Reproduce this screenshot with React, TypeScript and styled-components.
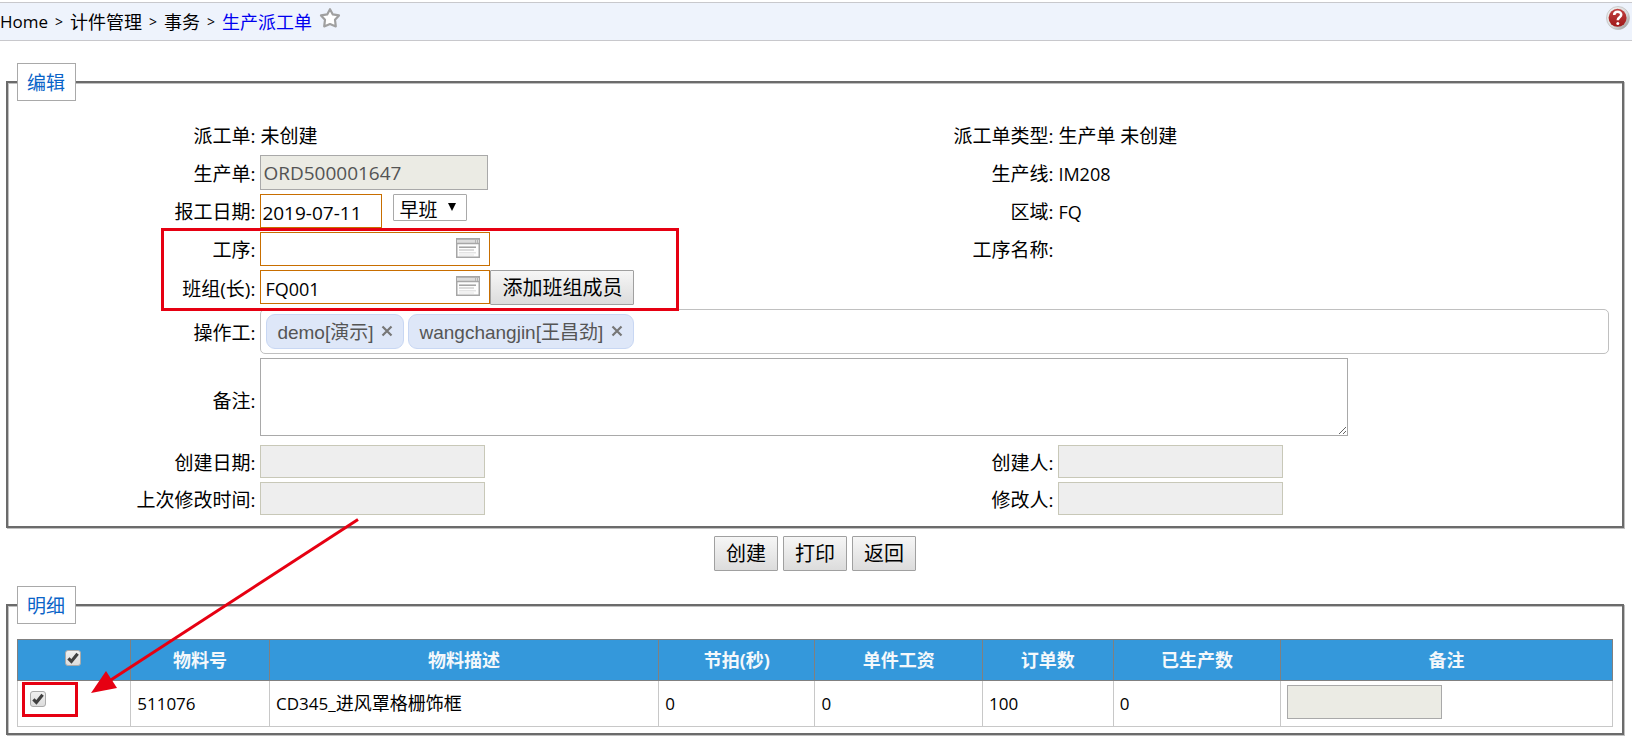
import React, { useState } from 'react';
import styled, { createGlobalStyle, css } from 'styled-components';

const fontStack = '"Open Sans", "Noto Sans CJK SC", sans-serif';

const GlobalStyle = createGlobalStyle`
  *, *::before, *::after { box-sizing: border-box; }
  body {
    margin: 0;
    background: #fff;
    color: #000;
    font: 19px/30px ${fontStack};
  }
  input, select, textarea, button { font-family: inherit; color: inherit; margin: 0; }
`;

const Page = styled.div`
  position: relative;
  padding-top: 2px;
`;

const TopBar = styled.header`
  display: flex;
  justify-content: space-between;
  align-items: flex-start;
  height: 39px;
  padding-right: 2px;
  border-top: 1px solid #c8c8cc;
  border-bottom: 1px solid #c8c8cc;
  background: #eef3fc;
`;

const Breadcrumb = styled.nav`
  display: flex;
  align-items: center;
  gap: 7px;
  height: 37px;
  font-size: 18px;
  white-space: nowrap;
`;

const Crumb = styled.a<{ $current?: boolean }>`
  color: ${(p) => (p.$current ? '#0000f0' : '#000')};
  text-decoration: none;
`;

const Latin = styled.span`
  font-size: 17px;
`;

const Separator = styled.span`
  font-size: 14px;
`;

const IconButton = styled.button`
  display: block;
  padding: 0;
  border: 0;
  background: none;
  line-height: 0;
`;

const StarButton = styled(IconButton)`
  align-self: flex-start;
  padding: 4px 0 0;
`;

const HelpButton = styled(IconButton)`
  padding-top: 3px;
`;

const Main = styled.main`
  padding: 22px 8px 6px 6px;
`;

const Panel = styled.fieldset`
  min-width: 0;
  margin: 0;
  padding: 0 9px;
  border: 2px solid #6b6b6b;
  box-shadow: 1px 1px 0 #c0c0c0, inset 1px 1px 0 #c0c0c0;
`;

const EditPanel = styled(Panel)`
  padding-bottom: 11px;
`;

const DetailPanel = styled(Panel)`
  padding-bottom: 6px;
`;

const Legend = styled.legend`
  padding: 4px 10px 2px 9px;
  border: 1px solid #a9a9a9;
  background: #fff;
  color: #0a64c8;
`;

const FormGrid = styled.div`
  display: grid;
  grid-template-columns: 15% 35% 15% 35%;
  row-gap: 4px;
  align-items: center;
  padding-top: 18px;
`;

const FieldLabel = styled.label`
  padding: 2px 1px 0 0;
  text-align: right;
  white-space: nowrap;
`;

const Field = styled.div<{ $wide?: boolean }>`
  display: flex;
  align-items: flex-start;
  padding: 0 4px;
  ${(p) => p.$wide && css`grid-column: span 3;`}
`;

const PlainValue = styled.output`
  padding-top: 2px;
  white-space: nowrap;
`;

const LatinValue = styled(PlainValue)`
  font-size: 18px;
`;

const TextInput = styled.input<{ $width: number; $tone?: 'required' | 'locked' | 'audit' }>`
  display: block;
  width: ${(p) => p.$width}px;
  height: 34px;
  padding: 0 2px;
  border: 1px solid #c86e00;
  background: #fff;
  font-size: 19px;
  outline: 0;
  ${(p) =>
    p.$tone === 'locked' &&
    css`
      border-color: #a9a9a9;
      background: #ebebe4;
      color: #545454;
    `}
  ${(p) =>
    p.$tone === 'audit' &&
    css`
      height: 33px;
      border-color: #c8c8b8;
      background: #eee;
    `}
`;

const OrderInput = styled(TextInput)`
  height: 35px;
  padding-top: 1px;
`;

const DateInput = styled(TextInput)`
  padding: 3px 1px 0;
`;

const Lookup = styled.div`
  display: flex;
  width: 230px;
  height: 34px;
  border: 1px solid #c86e00;
`;

const LookupInput = styled.input`
  flex: 1;
  min-width: 0;
  padding: 3px 4px 0;
  border: 0;
  outline: 0;
  background: none;
  font-size: 18px;
`;

const LookupButton = styled(IconButton)`
  align-self: flex-start;
  padding: 5px 9px 0 0;
`;

const ShiftPicker = styled.div`
  position: relative;
  margin-left: 11px;
`;

const ShiftSelect = styled.select`
  appearance: none;
  display: block;
  width: 74px;
  height: 27px;
  padding: 4px 0 0 5px;
  border: 1px solid #a9a9a9;
  border-radius: 1px;
  background: #fff;
  font-size: 19px;
  line-height: 22px;
  outline: 0;
`;

const SelectArrow = styled.svg`
  position: absolute;
  top: 9px;
  right: 11px;
  pointer-events: none;
`;

const PushButton = styled.button`
  height: 35px;
  padding: 1px 11px 0;
  border: 1px solid #a0a0a0;
  border-radius: 1px;
  background: linear-gradient(#f6f6f6, #dcdcdc);
  font-size: 20px;
  line-height: 32px;
  white-space: nowrap;
`;

const TagBox = styled.div`
  display: flex;
  flex: 1;
  gap: 4px;
  min-height: 45px;
  padding: 4px 5px;
  border: 1px solid #c0c0c0;
  border-radius: 5px;
`;

const Tag = styled.span`
  display: flex;
  align-items: center;
  height: 35px;
  padding: 2px 10px 0;
  border: 1px solid #c8d7f3;
  border-radius: 9px;
  background: #dee7f8;
  color: #555;
  font-family: "Liberation Sans", "Noto Sans CJK SC", sans-serif;
  font-size: 19px;
  white-space: nowrap;
`;

const TagRemove = styled(IconButton)`
  padding: 0 0 4px 8px;
`;

const RemarkField = styled(Field)`
  height: 83px;
`;

const Remark = styled.textarea`
  display: block;
  width: 1088px;
  max-width: 100%;
  height: 78px;
  padding: 2px;
  border: 1px solid #a9a9a9;
  font-size: 19px;
  outline: 0;
`;

const Actions = styled.div`
  display: flex;
  justify-content: center;
  gap: 5px;
  padding: 8px 0 15px;
`;

const DetailTable = styled.table`
  width: 100%;
  margin-top: 15px;
  border-collapse: collapse;
  table-layout: fixed;
  font-size: 18px;
`;

const HeadCell = styled.th<{ $share: number }>`
  width: ${(p) => p.$share}%;
  height: 41px;
  padding: 0;
  border: 1px solid #808080;
  background: #3498db;
  color: #f4f8fb;
  font-weight: 700;
`;

const Cell = styled.td`
  height: 46px;
  padding: 0 6px;
  border: 1px solid #c8c8c8;
  border-top-color: #808080;
  white-space: nowrap;
`;

const CheckCell = styled(Cell)`
  padding: 10px 12px 0;
  vertical-align: top;
`;

const RemarkCell = styled(Cell)`
  padding-top: 4px;
  vertical-align: top;
`;

const CheckBox = styled.span`
  position: relative;
  display: block;
  width: 16px;
  height: 16px;
`;

const HeadCheck = styled.div`
  display: flex;
  justify-content: center;
  padding: 0 2px 5px 0;
`;

const CheckInput = styled.input`
  appearance: none;
  display: block;
  width: 16px;
  height: 16px;
  border: 1px solid #aaa;
  border-radius: 3px;
  background: linear-gradient(#f0f0f0, #dcdcdc);
`;

const CheckMark = styled.svg`
  position: absolute;
  inset: 0;
  pointer-events: none;
`;

const Annotations = styled.svg`
  position: absolute;
  top: 0;
  left: 0;
  pointer-events: none;
`;

function Star() {
  return (
    <svg width="22" height="22" viewBox="0 0 22 22">
      <path
        d="M11 2.2 L13.8 7.4 L20 8.4 L16 12.8 L16.8 19.4 L11 17 L5.2 19.4 L6 12.8 L2 8.4 L8.2 7.4 Z"
        fill="#fff"
        stroke="#a0a0a0"
        strokeWidth="2.2"
        strokeLinejoin="round"
      />
    </svg>
  );
}

function Help() {
  return (
    <svg width="24" height="24" viewBox="0 0 24 24">
      <defs>
        <linearGradient id="rim" x1="0" y1="0" x2="1" y2="1">
          <stop offset="0" stopColor="#f4f4f4" />
          <stop offset="0.6" stopColor="#d8d8d8" />
          <stop offset="1" stopColor="#8c8c8c" />
        </linearGradient>
        <linearGradient id="disc" x1="0" y1="0" x2="0" y2="1">
          <stop offset="0" stopColor="#c04040" />
          <stop offset="1" stopColor="#a01818" />
        </linearGradient>
      </defs>
      <circle cx="12" cy="12" r="11.5" fill="url(#rim)" stroke="#b4b4b4" strokeWidth="0.6" />
      <circle cx="11.6" cy="11.8" r="9" fill="url(#disc)" />
      <path
        d="M8.2 9 C8.2 4.8 15.2 4.8 15.2 8.8 C15.2 11.4 11.8 11.2 11.8 14.2"
        fill="none"
        stroke="#fff"
        strokeWidth="2.6"
      />
      <circle cx="11.8" cy="17.6" r="1.5" fill="#fff" />
    </svg>
  );
}

function WindowIcon() {
  return (
    <svg width="24" height="20" viewBox="0 0 24 20">
      <rect x="0.75" y="0.75" width="22.5" height="18.5" fill="#fdfdfd" stroke="#a6a6a6" strokeWidth="1.5" />
      <rect x="1" y="1" width="22" height="4.5" fill="#dcdcdc" />
      <path d="M0 1H24M0 5.5H24" stroke="#a6a6a6" strokeWidth="1.4" />
      <path d="M19.5 1V5M21.5 1V5" stroke="#b4b4b4" />
      <path d="M3 9.2H20" stroke="#9a9a9a" strokeWidth="1.4" />
      <path d="M3 12H18" stroke="#c4c4c4" strokeWidth="1.2" />
      <path d="M3 14.8H20" stroke="#d8d8d8" />
      <path d="M3 17H18" stroke="#e4e4e4" />
    </svg>
  );
}

function Check({ label }: { label: string }) {
  return (
    <CheckBox>
      <CheckInput type="checkbox" defaultChecked aria-label={label} />
      <CheckMark width="16" height="16" viewBox="0 0 16 16">
        <path d="M3.4 8.4 L6.4 11.4 L12.6 3.8" fill="none" stroke="#404040" strokeWidth="3.2" />
      </CheckMark>
    </CheckBox>
  );
}

function LookupField({ id, initial, label }: { id: string; initial: string; label: string }) {
  const [value, setValue] = useState(initial);
  return (
    <Lookup>
      <LookupInput id={id} value={value} onChange={(e) => setValue(e.target.value)} />
      <LookupButton type="button" aria-label={label}>
        <WindowIcon />
      </LookupButton>
    </Lookup>
  );
}

const columns = [
  { title: '物料号', share: 8.7 },
  { title: '物料描述', share: 24.4 },
  { title: '节拍(秒)', share: 9.8 },
  { title: '单件工资', share: 10.5 },
  { title: '订单数', share: 8.2 },
  { title: '已生产数', share: 10.5 },
  { title: '备注', share: 20.8 },
];

export default function App() {
  const [operators, setOperators] = useState(['demo[演示]', 'wangchangjin[王昌劲]']);

  return (
    <Page>
      <GlobalStyle />
      <TopBar>
        <Breadcrumb>
          <Crumb href="#home"><Latin>Home</Latin></Crumb>
          <Separator>&gt;</Separator>
          <Crumb href="#piecework">计件管理</Crumb>
          <Separator>&gt;</Separator>
          <Crumb href="#transactions">事务</Crumb>
          <Separator>&gt;</Separator>
          <Crumb href="#dispatch" $current>生产派工单</Crumb>
          <StarButton type="button" aria-label="收藏"><Star /></StarButton>
        </Breadcrumb>
        <HelpButton type="button" aria-label="帮助"><Help /></HelpButton>
      </TopBar>

      <Main>
        <EditPanel>
          <Legend>编辑</Legend>
          <FormGrid>
            <FieldLabel htmlFor="dispatch">派工单:</FieldLabel>
            <Field><PlainValue id="dispatch">未创建</PlainValue></Field>
            <FieldLabel htmlFor="type">派工单类型:</FieldLabel>
            <Field><PlainValue id="type">生产单 未创建</PlainValue></Field>

            <FieldLabel htmlFor="order">生产单:</FieldLabel>
            <Field><OrderInput id="order" $width={228} $tone="locked" defaultValue="ORD500001647" disabled /></Field>
            <FieldLabel htmlFor="line">生产线:</FieldLabel>
            <Field><LatinValue id="line">IM208</LatinValue></Field>

            <FieldLabel htmlFor="date">报工日期:</FieldLabel>
            <Field>
              <DateInput id="date" $width={122} defaultValue="2019-07-11" />
              <ShiftPicker>
                <ShiftSelect aria-label="班次" defaultValue="早班">
                  <option>早班</option>
                  <option>晚班</option>
                </ShiftSelect>
                <SelectArrow width="8" height="8" viewBox="0 0 8 8">
                  <path d="M0 0H8L4 8Z" />
                </SelectArrow>
              </ShiftPicker>
            </Field>
            <FieldLabel htmlFor="area">区域:</FieldLabel>
            <Field><LatinValue id="area">FQ</LatinValue></Field>

            <FieldLabel htmlFor="process">工序:</FieldLabel>
            <Field><LookupField id="process" initial="" label="选择工序" /></Field>
            <FieldLabel htmlFor="processName">工序名称:</FieldLabel>
            <Field><PlainValue id="processName" /></Field>

            <FieldLabel htmlFor="team">班组(长):</FieldLabel>
            <Field $wide>
              <LookupField id="team" initial="FQ001" label="选择班组" />
              <PushButton type="button">添加班组成员</PushButton>
            </Field>

            <FieldLabel as="span">操作工:</FieldLabel>
            <Field $wide>
              <TagBox>
                {operators.map((name) => (
                  <Tag key={name}>
                    {name}
                    <TagRemove
                      type="button"
                      aria-label={`移除 ${name}`}
                      onClick={() => setOperators(operators.filter((o) => o !== name))}
                    >
                      <svg width="12" height="12" viewBox="0 0 12 12">
                        <path d="M1.5 1.5L10.5 10.5M10.5 1.5L1.5 10.5" stroke="#777" strokeWidth="2.2" />
                      </svg>
                    </TagRemove>
                  </Tag>
                ))}
              </TagBox>
            </Field>

            <FieldLabel htmlFor="remark">备注:</FieldLabel>
            <RemarkField $wide><Remark id="remark" /></RemarkField>

            <FieldLabel htmlFor="createdAt">创建日期:</FieldLabel>
            <Field><TextInput id="createdAt" $width={225} $tone="audit" readOnly /></Field>
            <FieldLabel htmlFor="createdBy">创建人:</FieldLabel>
            <Field><TextInput id="createdBy" $width={225} $tone="audit" readOnly /></Field>

            <FieldLabel htmlFor="modifiedAt">上次修改时间:</FieldLabel>
            <Field><TextInput id="modifiedAt" $width={225} $tone="audit" readOnly /></Field>
            <FieldLabel htmlFor="modifiedBy">修改人:</FieldLabel>
            <Field><TextInput id="modifiedBy" $width={225} $tone="audit" readOnly /></Field>
          </FormGrid>
        </EditPanel>

        <Actions>
          <PushButton type="button">创建</PushButton>
          <PushButton type="button">打印</PushButton>
          <PushButton type="button">返回</PushButton>
        </Actions>

        <DetailPanel>
          <Legend>明细</Legend>
          <DetailTable>
            <thead>
              <tr>
                <HeadCell $share={7.1}>
                  <HeadCheck><Check label="全选" /></HeadCheck>
                </HeadCell>
                {columns.map((c) => (
                  <HeadCell key={c.title} $share={c.share}>{c.title}</HeadCell>
                ))}
              </tr>
            </thead>
            <tbody>
              <tr>
                <CheckCell><Check label="选择 511076" /></CheckCell>
                <Cell><Latin>511076</Latin></Cell>
                <Cell><Latin>CD345_</Latin>进风罩格栅饰框</Cell>
                <Cell><Latin>0</Latin></Cell>
                <Cell><Latin>0</Latin></Cell>
                <Cell><Latin>100</Latin></Cell>
                <Cell><Latin>0</Latin></Cell>
                <RemarkCell><TextInput aria-label="备注" $width={155} $tone="locked" disabled /></RemarkCell>
              </tr>
            </tbody>
          </DetailTable>
        </DetailPanel>
      </Main>

      <Annotations width="700" height="741" viewBox="0 0 700 741" fill="none" stroke="#e60012" strokeWidth="3">
        <rect x="162.5" y="229.5" width="515" height="80" />
        <rect x="23.5" y="683.5" width="53" height="32" />
        <path d="M358 519.5L110 680.5" />
        <path d="M91 693L106 671L117 688Z" fill="#e60012" stroke="none" />
      </Annotations>
    </Page>
  );
}
